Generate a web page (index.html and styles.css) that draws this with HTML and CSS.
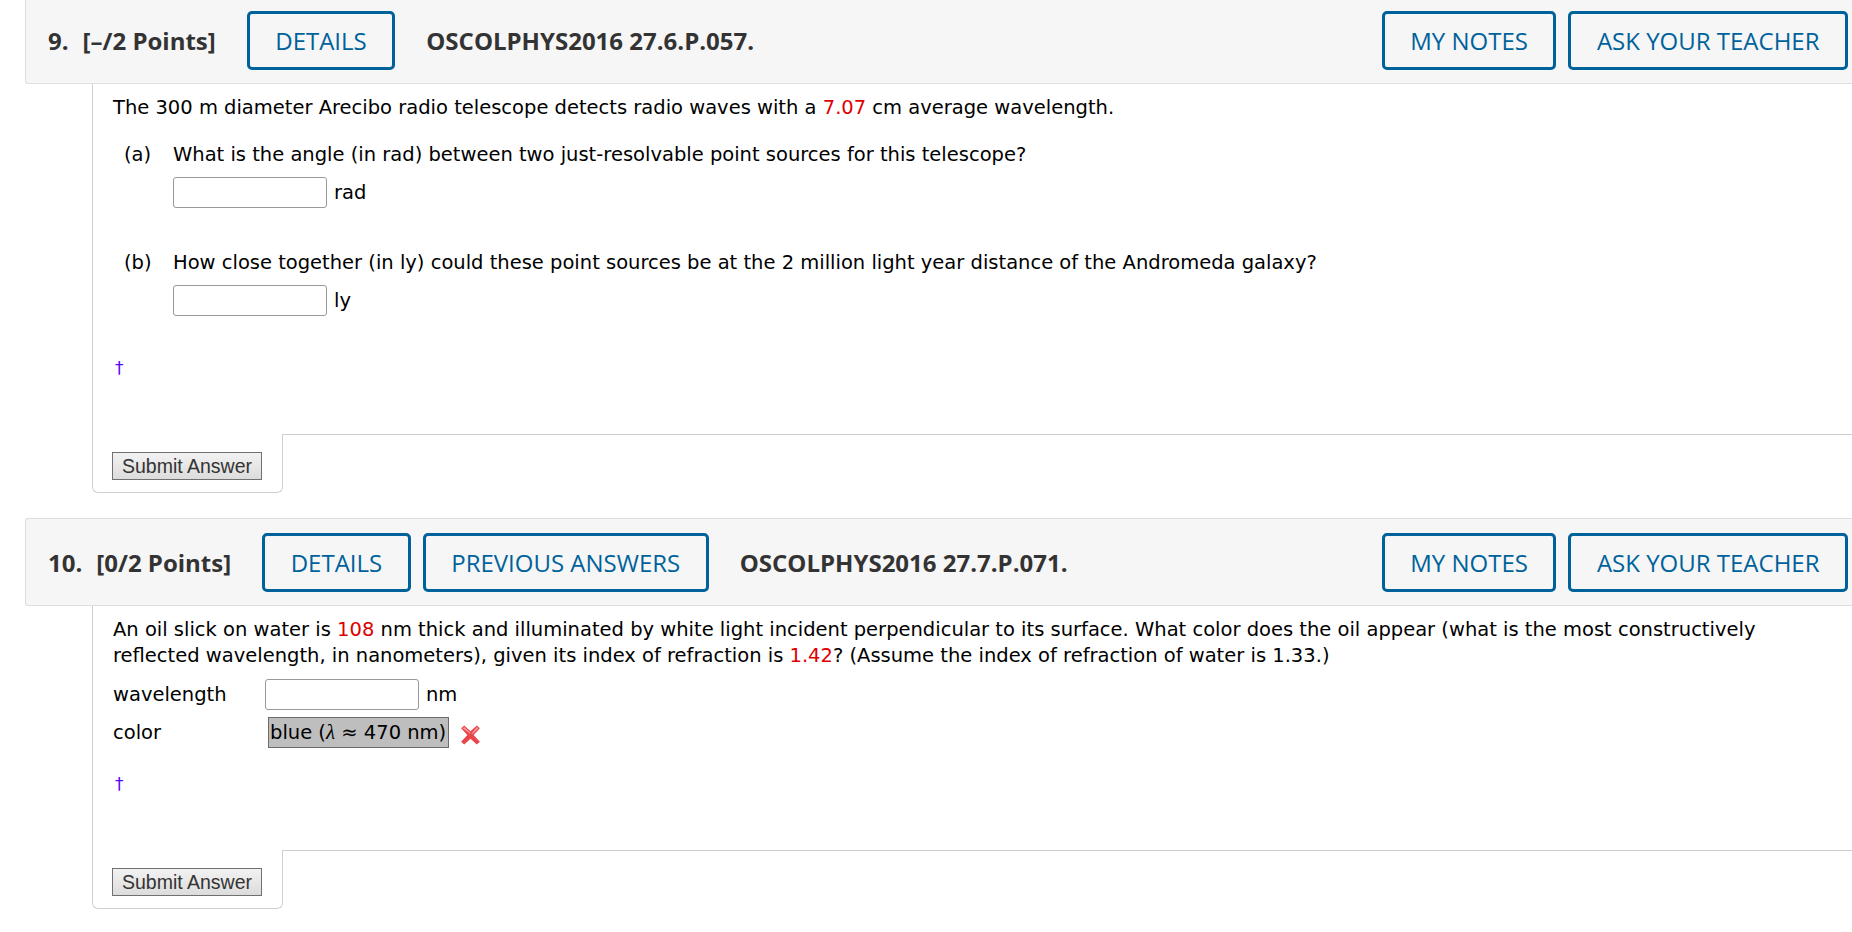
FILE: index.html
```html
<!DOCTYPE html>
<html lang="en">
<head>
    <meta charset="UTF-8">
    <meta name="viewport" content="width=device-width, initial-scale=1.0">
    <title>Assignment</title>
    <link rel="stylesheet" href="styles.css">
</head>
<body>
<div class="page">

    <section class="question">
        <div class="q-head">
            <div class="q-title"><span class="q-num">9.</span><span>[&ndash;/2 Points]</span></div>
            <button class="q-btn">DETAILS</button>
            <span class="q-code">OSCOLPHYS2016 27.6.P.057.</span>
            <div class="q-actions">
                <button class="q-btn">MY NOTES</button>
                <button class="q-btn">ASK YOUR TEACHER</button>
            </div>
        </div>

        <div class="q-body">
            <p class="q-text">The 300 m diameter Arecibo radio telescope detects radio waves with a <span class="val">7.07</span> cm average wavelength.</p>

            <div class="part">
                <span class="part-label">(a)</span>
                <div class="part-main">
                    <div>What is the angle (in rad) between two just-resolvable point sources for this telescope?</div>
                    <div class="answer"><input class="answer-box" type="text"><span class="unit">rad</span></div>
                </div>
            </div>

            <div class="part part-next">
                <span class="part-label">(b)</span>
                <div class="part-main">
                    <div>How close together (in ly) could these point sources be at the 2 million light year distance of the Andromeda galaxy?</div>
                    <div class="answer"><input class="answer-box" type="text"><span class="unit">ly</span></div>
                </div>
            </div>

            <div class="dagger">&dagger;</div>
        </div>

        <div class="q-foot">
            <div class="submit-tab"><button class="submit-btn">Submit Answer</button></div>
            <div class="foot-rule"></div>
        </div>
    </section>

    <section class="question">
        <div class="q-head">
            <div class="q-title"><span class="q-num">10.</span><span>[0/2 Points]</span></div>
            <button class="q-btn">DETAILS</button>
            <button class="q-btn">PREVIOUS ANSWERS</button>
            <span class="q-code">OSCOLPHYS2016 27.7.P.071.</span>
            <div class="q-actions">
                <button class="q-btn">MY NOTES</button>
                <button class="q-btn">ASK YOUR TEACHER</button>
            </div>
        </div>

        <div class="q-body">
            <p class="q-text q-text-wide">An oil slick on water is <span class="val">108</span> nm thick and illuminated by white light incident perpendicular to its surface. What color does the oil appear (what is the most constructively reflected wavelength, in nanometers), given its index of refraction is <span class="val">1.42</span>? (Assume the index of refraction of water is 1.33.)</p>

            <div class="field-row">
                <span class="field-label">wavelength</span>
                <input class="answer-box" type="text"><span class="unit">nm</span>
            </div>
            <div class="field-row field-color">
                <span class="field-label">color</span>
                <span class="picked">blue (<i class="lambda">&lambda;</i> &asymp; 470 nm)</span>
                <svg class="wrong" width="23" height="20" viewBox="0 0 22 19">
                    <path d="M2 3 L5 0.5 L11 6 L17 0.5 L20 3 L14 9.5 L20 16 L17 18.5 L11 13 L5 18.5 L2 16 L8 9.5 Z" fill="#e8464a"/>
                    <path d="M3.5 3 L5 1.8 L11 7.3 L11 8.5 Z M17 1.8 L18.5 3 L13 8.5 L12.4 7.6 Z" fill="#f59a9b"/>
                </svg>
            </div>

            <div class="dagger dagger-2">&dagger;</div>
        </div>

        <div class="q-foot">
            <div class="submit-tab"><button class="submit-btn">Submit Answer</button></div>
            <div class="foot-rule"></div>
        </div>
    </section>

</div>
</body>
</html>
```

FILE: styles.css
```css
body {
    margin: 0;
    padding: 0;
    background-color: #fff;
    color: #000;
    font-family: "DejaVu Sans", Verdana, sans-serif;
    font-size: 19.5px;
    line-height: 26px;
    overflow: hidden;
}

.page {
    margin-top: -4px;
}

.question + .question {
    margin-top: 25px;
}

/* question header bar */

.q-head {
    display: flex;
    align-items: center;
    margin-left: 25px;
    padding: 14px 4px 13px 22px;
    background-color: #f6f6f6;
    border: 1px solid #dedede;
    border-right: none;
    border-radius: 3px 0 0 3px;
    font-family: "Open Sans", sans-serif;
    font-size: 24px;
    color: #333;
}

.q-title {
    font-weight: 700;
    margin-right: 31px;
}

.q-num {
    margin-right: 14px;
}

.q-code {
    font-weight: 700;
    margin-left: 31px;
}

.q-btn {
    height: 59px;
    padding: 0 25.5px;
    background-color: transparent;
    border: 3px solid #00629b;
    border-radius: 5px;
    color: #00629b;
    font-family: "Open Sans", sans-serif;
    font-size: 24px;
    font-weight: 500;
}

.q-btn + .q-btn {
    margin-left: 12px;
}

.q-actions {
    display: flex;
    margin-left: auto;
}

/* question body */

.q-body {
    margin-left: 92px;
    padding: 11px 0 53px 20px;
    border-left: 1px solid #cfcfcf;
}

.q-text {
    margin: 0 0 21px 0;
}

.q-text-wide {
    margin-bottom: 10px;
    padding-right: 80px;
}

.val {
    color: #e00000;
}

.part {
    display: flex;
    padding-left: 11px;
}

.part-next {
    margin-top: 42px;
}

.part-label {
    width: 49px;
}

.answer {
    display: flex;
    align-items: center;
    margin-top: 9px;
}

.answer-box {
    box-sizing: border-box;
    width: 154px;
    height: 31px;
    margin: 0;
    padding: 2px 4px;
    border: 1px solid #999;
    border-radius: 3px;
    background-color: #fff;
    font: inherit;
}

.unit {
    margin-left: 7px;
}

.field-row {
    display: flex;
    align-items: center;
    height: 31px;
}

.field-color {
    margin-top: 7px;
}

.field-label {
    width: 152px;
}

.picked {
    box-sizing: border-box;
    height: 31px;
    margin-left: 3px;
    padding: 0 2px 0 1px;
    background-color: #bebebe;
    border: 1px solid #6b6b6b;
    line-height: 28px;
}

.lambda {
    font-family: "Liberation Serif", serif;
    font-size: 21px;
}

.wrong {
    margin-left: 10px;
    margin-top: 5px;
}

.dagger {
    margin-top: 39px;
    padding-left: 2px;
    color: #5a00ff;
    font-size: 17px;
}

.dagger-2 {
    margin-top: 23px;
}

/* footer tab with the submit button */

.q-foot {
    display: flex;
    margin-left: 92px;
}

.submit-tab {
    width: 170px;
    padding: 18px 0 12px 19px;
    border: 1px solid #cfcfcf;
    border-top: none;
    border-radius: 0 0 6px 6px;
}

.foot-rule {
    flex: 1;
    border-top: 1px solid #cfcfcf;
}

.submit-btn {
    box-sizing: border-box;
    width: 150px;
    height: 28px;
    padding: 0;
    background: linear-gradient(#f2f2f2, #dcdcdc);
    border: 1px solid #707070;
    color: #333;
    font-family: "Liberation Sans", Arial, sans-serif;
    font-size: 19.5px;
}
```
